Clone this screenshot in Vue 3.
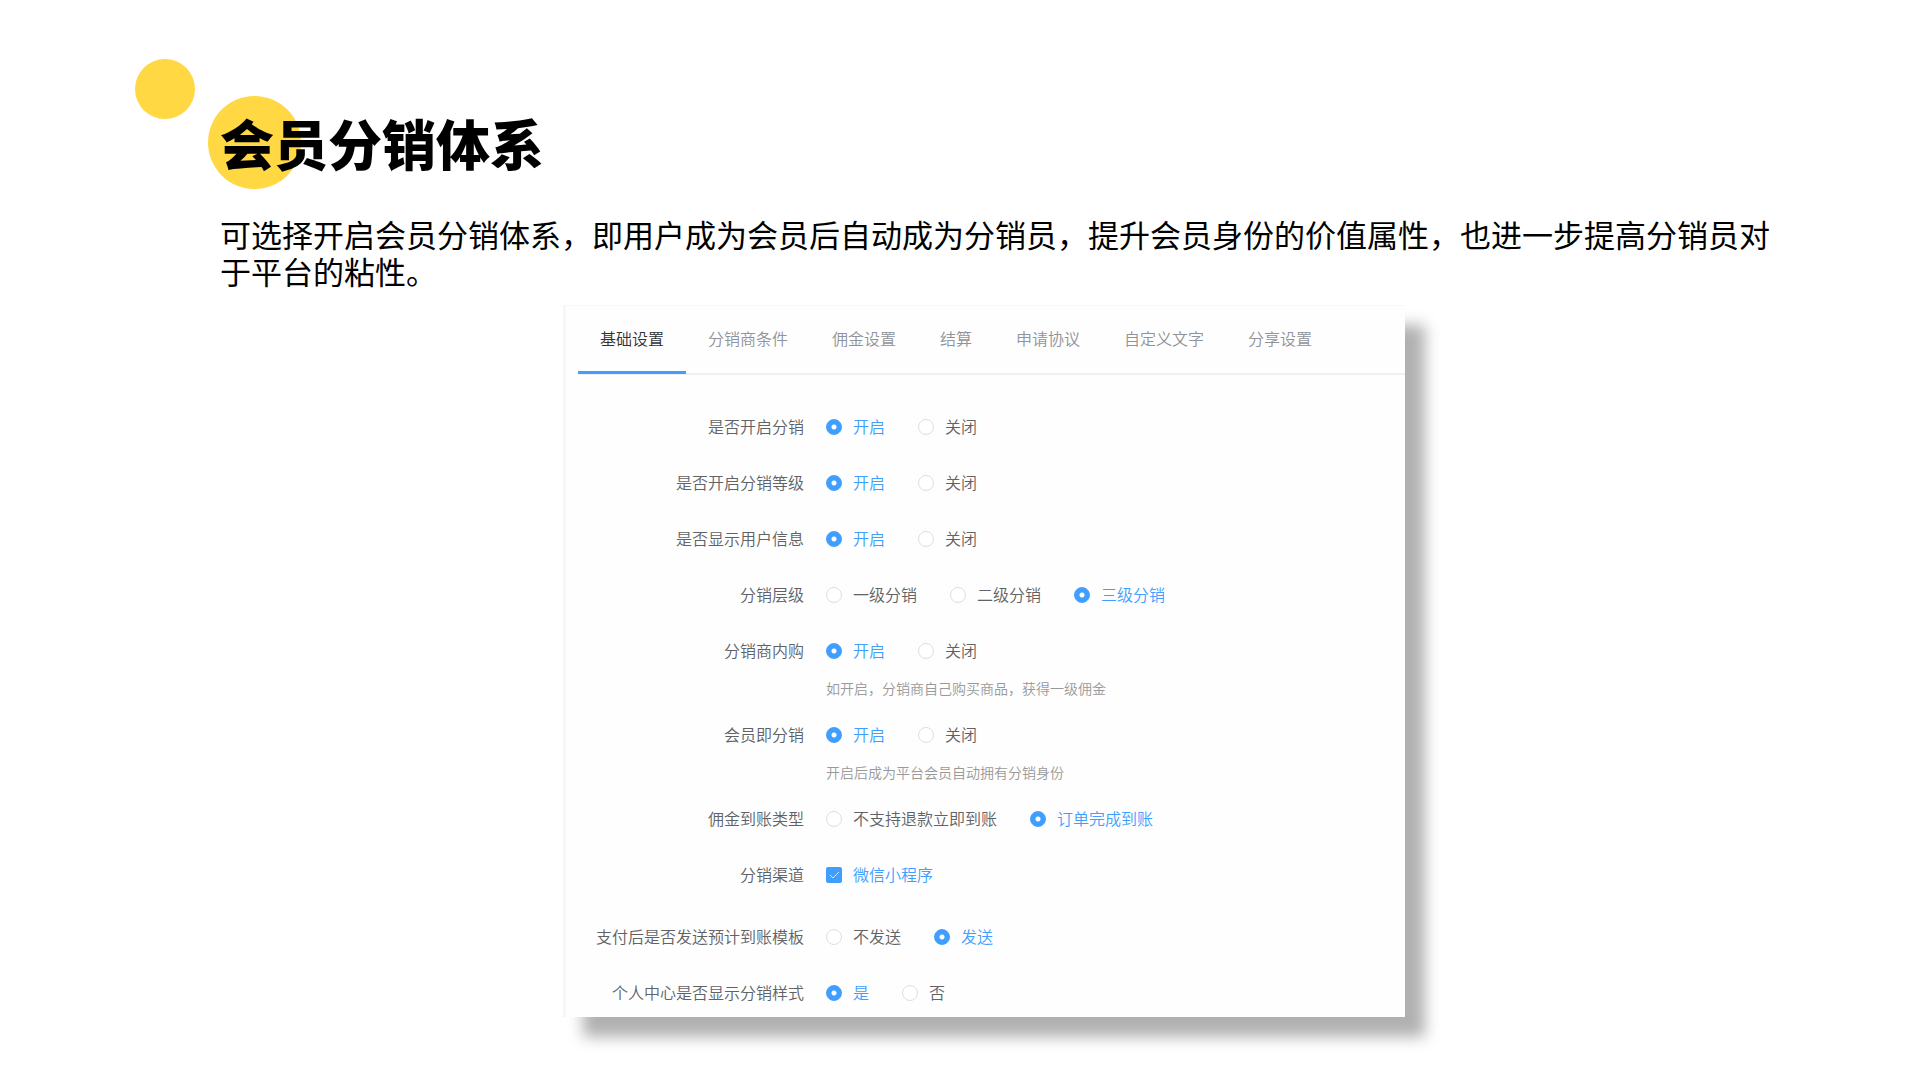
<script setup>
import { reactive, ref } from 'vue'

const tabs = ['基础设置', '分销商条件', '佣金设置', '结算', '申请协议', '自定义文字', '分享设置']
const activeTab = ref('基础设置')

const rows = [
  { id: 'enabled', label: '是否开启分销', options: ['开启', '关闭'] },
  { id: 'grade', label: '是否开启分销等级', options: ['开启', '关闭'] },
  { id: 'userInfo', label: '是否显示用户信息', options: ['开启', '关闭'] },
  { id: 'level', label: '分销层级', options: ['一级分销', '二级分销', '三级分销'] },
  { id: 'selfBuy', label: '分销商内购', options: ['开启', '关闭'], hint: '如开启，分销商自己购买商品，获得一级佣金' },
  { id: 'member', label: '会员即分销', options: ['开启', '关闭'], hint: '开启后成为平台会员自动拥有分销身份' },
  { id: 'arrival', label: '佣金到账类型', options: ['不支持退款立即到账', '订单完成到账'] },
  { id: 'channel', label: '分销渠道', options: ['微信小程序'], multiple: true },
  { id: 'template', label: '支付后是否发送预计到账模板', options: ['不发送', '发送'] },
  { id: 'center', label: '个人中心是否显示分销样式', options: ['是', '否'] },
]

const form = reactive({
  enabled: '开启',
  grade: '开启',
  userInfo: '开启',
  level: '三级分销',
  selfBuy: '开启',
  member: '开启',
  arrival: '订单完成到账',
  channel: ['微信小程序'],
  template: '发送',
  center: '是',
})
</script>

<template>
  <main class="slide">
    <header class="intro">
      <span class="dot dot-small" aria-hidden="true"></span>
      <span class="dot dot-large" aria-hidden="true"></span>
      <h1 class="title">会员分销体系</h1>
      <p class="lead">可选择开启会员分销体系，即用户成为会员后自动成为分销员，提升会员身份的价值属性，也进一步提高分销员对于平台的粘性。</p>
    </header>

    <div class="stage">
      <section class="card">
        <div class="tabs" role="tablist">
          <button
            v-for="tab in tabs"
            :key="tab"
            type="button"
            role="tab"
            class="tab"
            :class="{ active: tab === activeTab }"
            :aria-selected="tab === activeTab"
            @click="activeTab = tab"
          >{{ tab }}</button>
        </div>

        <form class="form" @submit.prevent>
          <div
            v-for="row in rows"
            :key="row.id"
            class="row"
            :class="{ spacious: row.multiple }"
            role="group"
            :aria-labelledby="`label-${row.id}`"
          >
            <span :id="`label-${row.id}`" class="row-label">{{ row.label }}</span>
            <div class="field">
              <div class="options">
                <label v-for="option in row.options" :key="option" class="option">
                  <span v-if="row.multiple" class="check">
                    <input v-model="form[row.id]" type="checkbox" :value="option" />
                    <svg viewBox="0 0 16 16" aria-hidden="true"><path d="M4 8l3 3 6-6" /></svg>
                  </span>
                  <input v-else v-model="form[row.id]" type="radio" :name="row.id" :value="option" />
                  <span class="option-text">{{ option }}</span>
                </label>
              </div>
              <p v-if="row.hint" class="hint">{{ row.hint }}</p>
            </div>
          </div>
        </form>
      </section>
    </div>
  </main>
</template>

<style>
body {
  margin: 0;
  background: #fff;
}
</style>

<style scoped>
.slide {
  box-sizing: border-box;
  min-height: 100vh;
  padding: 111px 0 60px;
  overflow: hidden;
  background: #fff;
  color: #000;
  font-family: "Noto Sans CJK SC", sans-serif;
}

.intro {
  position: relative;
  padding: 0 140px 0 220px;
}

.dot {
  position: absolute;
  border-radius: 50%;
  background: #ffd843;
}

.dot-small {
  top: -52px;
  left: 135px;
  width: 60px;
  height: 60px;
}

.dot-large {
  top: -15px;
  left: 208px;
  width: 93px;
  height: 93px;
}

.title {
  position: relative;
  margin: 0;
  font-size: 54px;
  font-weight: 900;
  line-height: 64px;
}

.lead {
  margin: 40px 0 16px;
  font-size: 31px;
  line-height: 37px;
}

.stage {
  display: grid;
  grid-template-columns: 563fr 842fr 515fr;
}

.card {
  grid-column: 2;
  border-top: 1px solid #f7f7f7;
  border-left: 3px solid #f7f7f7;
  background: #fefefe;
  box-shadow: 20px 20px 14px rgba(0, 0, 0, 0.31);
  font-size: 16px;
  font-weight: 350;
}

.tabs {
  display: flex;
  margin-left: 12px;
  border-bottom: 2px solid #f0f0f1;
}

.tab {
  position: relative;
  height: 67px;
  padding: 0 22px 4px;
  border: 0;
  background: none;
  color: #909399;
  font: inherit;
  white-space: nowrap;
  cursor: pointer;
}

.tab.active {
  color: #303133;
}

.tab.active::after {
  content: "";
  position: absolute;
  right: 0;
  bottom: -1px;
  left: 0;
  height: 3px;
  background: #409eff;
}

.form {
  padding-top: 24px;
}

.row {
  display: grid;
  grid-template-columns: 238px 1fr;
  column-gap: 22px;
  padding: 12px 0;
}

.row.spacious {
  padding-bottom: 18px;
}

.row:last-child {
  padding-bottom: 8px;
}

.row-label {
  color: #606266;
  line-height: 30px;
  text-align: right;
  white-space: nowrap;
}

.options {
  display: flex;
  gap: 33px;
}

.option {
  display: flex;
  align-items: center;
  gap: 11px;
  height: 32px;
  color: #606266;
  white-space: nowrap;
  cursor: pointer;
}

.option-text {
  padding-bottom: 2px;
  line-height: 30px;
}

.option:has(input:checked) {
  color: #409eff;
}

input {
  display: block;
  box-sizing: border-box;
  width: 16px;
  height: 16px;
  margin: 0;
  border: 1px solid #dcdfe6;
  background: #fff;
  appearance: none;
  cursor: pointer;
}

input[type="radio"] {
  border-radius: 50%;
}

input[type="radio"]:checked {
  border-color: #409eff;
  background: radial-gradient(circle, #fff 2px, #409eff 3px);
}

.check {
  position: relative;
}

.check input {
  border-radius: 2px;
}

.check input:checked {
  border-color: #409eff;
  background: #409eff;
}

.check svg {
  position: absolute;
  inset: 0;
  fill: none;
  stroke: #fff;
  stroke-width: 1;
  opacity: 0.75;
  pointer-events: none;
}

.hint {
  margin: 14px 0 0;
  color: #999;
  font-size: 14px;
  line-height: 14px;
}
</style>
